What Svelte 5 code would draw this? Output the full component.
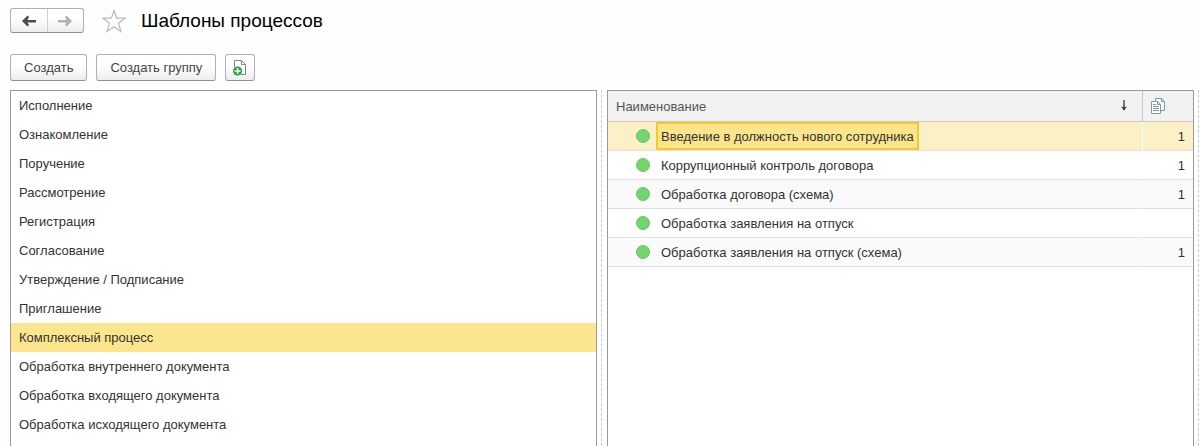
<script>
  let selectedProcess = $state('Комплексный процесс');
  let selectedTemplate = $state(0);
  let favorite = $state(false);

  const processes = [
    'Исполнение',
    'Ознакомление',
    'Поручение',
    'Рассмотрение',
    'Регистрация',
    'Согласование',
    'Утверждение / Подписание',
    'Приглашение',
    'Комплексный процесс',
    'Обработка внутреннего документа',
    'Обработка входящего документа',
    'Обработка исходящего документа',
  ];

  const templates = [
    { name: 'Введение в должность нового сотрудника', files: 1 },
    { name: 'Коррупционный контроль договора', files: 1 },
    { name: 'Обработка договора (схема)', files: 1 },
    { name: 'Обработка заявления на отпуск', files: null },
    { name: 'Обработка заявления на отпуск (схема)', files: 1 },
  ];
</script>

<div class="page">
  <header class="title-bar">
    <div class="nav-group">
      <button type="button" class="nav-btn" aria-label="Назад">
        <svg width="14" height="12" viewBox="0 0 14 12">
          <path d="M0 6l5.500-5.500L7 2 5.500 5H14v2.400H5.500L7 10l-1.500 1.500z" fill="#4c4c4c" />
        </svg>
      </button>
      <button type="button" class="nav-btn" aria-label="Вперед">
        <svg width="14" height="12" viewBox="0 0 14 12">
          <path d="M14 6L8.500.5 7 2l1.500 3H0v2.400h8.500L7 10l1.500 1.500z" fill="#b0b0b0" />
        </svg>
      </button>
    </div>
    <button
      type="button"
      class="star-btn"
      aria-label="Избранное"
      aria-pressed={favorite}
      onclick={() => (favorite = !favorite)}
    >
      <svg width="24" height="24" viewBox="0 0 24 24">
        <path
          d="M12 1.500l2.700 7.700H23l-6.500 5.100 2.500 8.200-7-4.800-7 4.800 2.500-8.200L1 9.200h8.300z"
          fill={favorite ? '#fbd44c' : '#fff'}
          stroke="#b8b8b8"
          stroke-width="1.200"
        />
      </svg>
    </button>
    <h1>Шаблоны процессов</h1>
  </header>

  <div class="toolbar">
    <button type="button" class="btn">Создать</button>
    <button type="button" class="btn">Создать группу</button>
    <button type="button" class="btn icon-btn" aria-label="Создать по шаблону">
      <svg width="14" height="16" viewBox="0 0 14 16">
        <path d="M1.500 7V.5h7l4 4v10H8" fill="#fff" stroke="#7b8a92" />
        <path d="M8.500.5v4h4" fill="none" stroke="#7b8a92" />
        <circle cx="4.600" cy="11" r="4.600" fill="#2fa043" />
        <path d="M4.600 8v6M1.600 11h6" stroke="#fff" stroke-width="1.500" />
      </svg>
    </button>
  </div>

  <main class="panels">
    <ul class="process-list">
      {#each processes as process}
        <li>
          <button
            type="button"
            class="process"
            class:selected={selectedProcess === process}
            onclick={() => (selectedProcess = process)}
          >
            {process}
          </button>
        </li>
      {/each}
    </ul>

    <div class="splitter"></div>

    <div class="templates">
      <table>
        <thead>
          <tr>
            <th>
              <div class="head-cell">
                <span>Наименование</span>
                <svg width="8" height="12" viewBox="0 0 8 12">
                  <path d="M4 0v10" stroke="#333" stroke-width="1.300" />
                  <path d="M1 6.500l3 1 3-1-3 4z" fill="#333" />
                </svg>
              </div>
            </th>
            <th class="files" aria-label="Файлы">
              <svg width="14" height="16" viewBox="0 0 14 16">
                <path d="M4.500.5h6l3 3v9h-9z" fill="#f4f8f9" stroke="#829ba3" />
                <path d="M10.500.5v3h3" fill="none" stroke="#829ba3" />
                <path d="M.5 3.500h6l3 3v9h-9z" fill="#fff" stroke="#829ba3" />
                <path d="M6.500 3.500v3h3M2 6.500h3M2 8.500h6M2 10.500h6M2 12.500h6" fill="none" stroke="#829ba3" />
              </svg>
            </th>
          </tr>
        </thead>
        <tbody>
          {#each templates as template, i}
            <tr class:current={selectedTemplate === i} onclick={() => (selectedTemplate = i)}>
              <td>
                <div class="name-cell">
                  <span class="status"></span>
                  <span class="name">{template.name}</span>
                </div>
              </td>
              <td class="files">{template.files ?? ''}</td>
            </tr>
          {/each}
        </tbody>
      </table>
    </div>

    <div class="splitter edge"></div>
  </main>
</div>

<style>
  :global(body) {
    margin: 0;
    background: #fefefe;
  }

  .page {
    display: flex;
    flex-direction: column;
    box-sizing: border-box;
    min-height: 100vh;
    padding-top: 8px;
    font-family: 'Liberation Sans', Arial, sans-serif;
    font-size: 13px;
    color: #333;
  }

  button {
    font: inherit;
    color: inherit;
    cursor: pointer;
  }

  .title-bar {
    display: flex;
    align-items: center;
    height: 25px;
    padding: 0 10px;
  }

  .nav-group {
    display: flex;
    box-sizing: border-box;
    width: 74px;
    height: 25px;
    border: 1px solid #b0b0b0;
    border-bottom-color: #909090;
    border-radius: 3px;
    background: linear-gradient(#fff 40%, #ededed);
  }

  .nav-btn {
    display: flex;
    flex: 1;
    align-items: center;
    justify-content: center;
    padding: 0;
    border: none;
    background: none;
  }

  .nav-btn + .nav-btn {
    border-left: 1px solid #d0d0d0;
  }

  .star-btn {
    display: flex;
    margin: 0 15px 0 18px;
    padding: 0;
    border: none;
    background: none;
  }

  h1 {
    margin: 0;
    font-size: 19px;
    font-weight: normal;
    line-height: 24px;
    color: #000;
  }

  .toolbar {
    display: flex;
    gap: 9px;
    padding: 21px 10px 9px;
  }

  .btn {
    box-sizing: border-box;
    height: 27px;
    padding: 0 13px;
    border: 1px solid #b0b0b0;
    border-bottom-color: #909090;
    border-radius: 3px;
    background: linear-gradient(#fff 40%, #ededed);
    color: #444;
  }

  .icon-btn {
    display: flex;
    align-items: center;
    justify-content: center;
    width: 30px;
    padding: 0;
  }

  .panels {
    display: flex;
    flex: 1;
    padding-left: 10px;
  }

  .process-list,
  .templates {
    box-sizing: border-box;
    flex: 1;
    min-width: 0;
    border: 1px solid #999;
    border-bottom: none;
    background: #fff;
  }

  .process-list {
    margin: 0;
    padding: 0;
    list-style: none;
  }

  .process {
    display: block;
    width: 100%;
    height: 29px;
    padding: 0 8px;
    border: none;
    background: none;
    text-align: left;
  }

  .process.selected {
    background: #fce68d;
  }

  .splitter {
    width: 4px;
    margin-right: 5px;
    border-right: 1px dashed #ccc;
  }

  .splitter.edge {
    margin-right: 1px;
  }

  table {
    width: 100%;
    border-collapse: separate;
    border-spacing: 0;
  }

  th {
    height: 30px;
    padding: 0 8px;
    border-bottom: 1px solid #c8c8c8;
    background: #f2f2f2;
    font-weight: normal;
    text-align: left;
    color: #555;
  }

  th.files {
    width: 34px;
    border-left: 1px solid #c8c8c8;
  }

  th.files svg {
    display: block;
  }

  .head-cell {
    display: flex;
    align-items: center;
    justify-content: space-between;
    padding-right: 6px;
  }

  td {
    height: 28px;
    padding: 0 8px;
    border-bottom: 1px solid #e0e0e0;
  }

  td.files {
    border-left: 1px solid transparent;
    text-align: right;
  }

  tbody tr:nth-child(odd) {
    background: #fafafa;
  }

  tbody tr.current {
    background: #fcf1c6;
  }

  tr.current td.files {
    border-left-color: #fff;
  }

  .name-cell {
    display: flex;
    align-items: center;
    gap: 6px;
    padding-left: 20px;
  }

  .status {
    box-sizing: border-box;
    width: 14px;
    height: 14px;
    border: 1px solid #6cc267;
    border-radius: 50%;
    background: #74d56e;
  }

  .name {
    box-sizing: border-box;
    height: 28px;
    padding: 0 3px;
    border: 2px solid transparent;
    line-height: 25px;
    white-space: nowrap;
  }

  tr.current .name {
    border-color: #f5c830;
    background: #fae58b;
  }
</style>
